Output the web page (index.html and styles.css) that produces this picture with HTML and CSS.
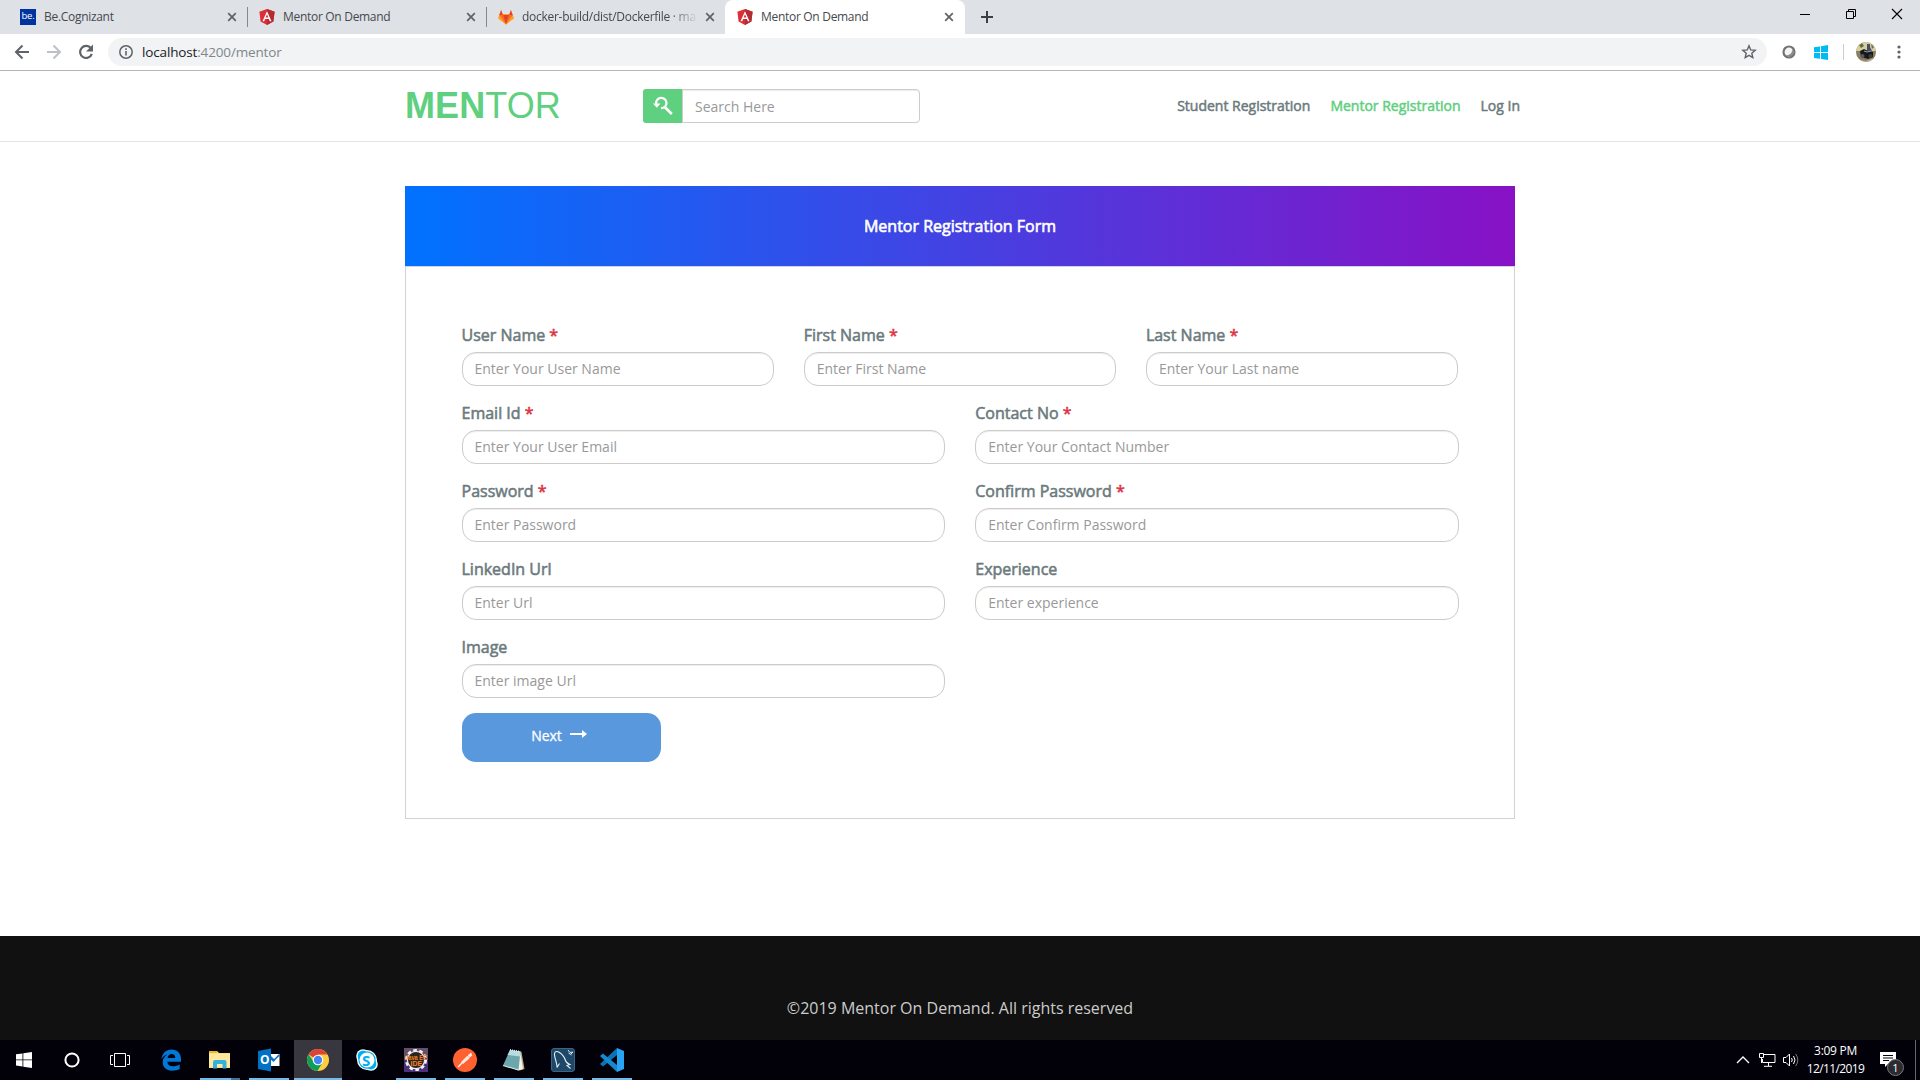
FILE: index.html
```html
<!DOCTYPE html>
<html lang="en">
<head>
<meta charset="utf-8">
<title>Mentor On Demand</title>
<link rel="stylesheet" href="styles.css">
</head>
<body>
<svg class="defs" width="0" height="0">
  <symbol id="angular" viewBox="0 0 16 16"><path d="M8 0l7.6 2.7-1.2 9.7L8 16l-6.400-3.600L.4 2.700z" fill="#dd2d35"/><path d="M8 0l7.600 2.700-1.200 9.700L8 16z" fill="#b52b32"/><path d="M8 2.200L3.500 12.200h1.700l.9-2.200h3.800l.9 2.200h1.700zM8 5.300l1.300 3.200H6.700z" fill="#fff"/></symbol>
  <symbol id="close" viewBox="0 0 10 10"><path d="M1.200 1.200l7.600 7.600M8.800 1.200L1.200 8.800" stroke="#5f6368" stroke-width="1.700" fill="none"/></symbol>
</svg>
<div class="screen">
  <div class="tabstrip">
    <div class="tab"><span class="be">be.</span><span class="tab-title">Be.Cognizant</span><svg class="x"><use href="#close"/></svg></div>
    <div class="tab divided"><svg class="fav"><use href="#angular"/></svg><span class="tab-title">Mentor On Demand</span><svg class="x"><use href="#close"/></svg></div>
    <div class="tab divided"><svg class="fav" viewBox="0 0 16 16"><path d="M8 15.500L0 9.500 1.300 5h13.400L16 9.500z" fill="#fca326"/><path d="M3.100 .8L1.300 6h3.600zM12.900 .8L14.700 6h-3.600z" fill="#e24329"/><path d="M1.300 6H5l3 9.500zM14.700 6H11l-3 9.500z" fill="#fc6d26"/><path d="M5 6h6l-3 9.500z" fill="#e24329"/></svg><span class="tab-title fade">docker-build/dist/Dockerfile · ma</span><svg class="x"><use href="#close"/></svg></div>
    <div class="tab active"><svg class="fav"><use href="#angular"/></svg><span class="tab-title">Mentor On Demand</span><svg class="x"><use href="#close"/></svg></div>
    <svg class="plus" viewBox="0 0 12 12"><path d="M6 0v12M0 6h12" stroke="#3c4043" stroke-width="2"/></svg>
    <div class="winctl">
      <svg viewBox="0 0 46 28"><path d="M18 14.500h10" stroke="#000"/></svg>
      <svg viewBox="0 0 46 28"><path d="M18.500 11.500h7v7h-7zM20.500 11V9.500h7v7H26" fill="none" stroke="#000"/></svg>
      <svg viewBox="0 0 46 28"><path d="M18 9l10 10M28 9L18 19" stroke="#000" stroke-width="1.100"/></svg>
    </div>
  </div>
  <div class="toolbar">
    <svg class="nav-ic" viewBox="0 0 32 36"><path d="M29 18H16.500M22.500 11.500L16 18l6.500 6.500" fill="none" stroke="#5f6368" stroke-width="2"/></svg>
    <svg class="nav-ic" viewBox="0 0 32 36"><path d="M15 18h12.500M21.500 11.500L28 18l-6.500 6.500" fill="none" stroke="#bdc1c6" stroke-width="2"/></svg>
    <svg class="nav-ic" viewBox="0 0 32 36"><path d="M27 14.500a6 6 0 1 0 .8 5.300" fill="none" stroke="#5f6368" stroke-width="2.200"/><path d="M29 10.500v7h-7z" fill="#5f6368"/></svg>
    <div class="omnibox">
      <svg class="info" viewBox="0 0 14 14"><circle cx="7" cy="7" r="6.200" fill="none" stroke="#5f6368" stroke-width="1.500"/><path d="M7 6v4.500M7 3.300V5" stroke="#5f6368" stroke-width="1.600"/></svg>
      <span class="url">localhost<i>:4200/mentor</i></span>
      <svg class="star" viewBox="0 0 16 16"><path d="M8 1.800l1.700 4.100 4.500.4-3.400 2.900 1 4.400L8 11.300l-3.800 2.300 1-4.400-3.400-2.900 4.500-.4z" fill="none" stroke="#5f6368" stroke-width="1.400"/></svg>
    </div>
    <div class="exts">
      <svg width="14" height="14" viewBox="0 0 14 14"><circle cx="7" cy="7" r="5.500" fill="#f4f4f4" stroke="#737373" stroke-width="2.200"/><path d="M10.500 4.500A4.300 4.300 0 0 1 4 10.300C8 10.500 10 8 10.500 4.500" fill="#8a8a8a"/></svg>
      <svg width="14" height="15" viewBox="0 0 14 15"><path d="M0 2.300l6-.9v5.700H0zM7 1.200L14 0v7.100H7zM0 8.100h6v5.700l-6-.9zM7 8.100h7V15l-7-1z" fill="#00bcf2"/></svg>
      <span class="vline"></span>
      <svg width="20" height="20" viewBox="0 0 20 20"><clipPath id="c"><circle cx="10" cy="10" r="10"/></clipPath><g clip-path="url(#c)"><path d="M0 0h20v20H0z" fill="#8a7d62"/><path d="M0 0h20v9H0z" fill="#d4cf9f"/><path d="M3 3l3-2 2 3-3 2zM15 2l3 3-2 2z" fill="#6b6b3e"/><path d="M11 2h3v3l2 4h-5z" fill="#4a4a70"/><path d="M4 9l4-2 4 2 5 1v5l-5 2-7-2z" fill="#16181b"/><circle cx="6.500" cy="14" r="2" fill="#54595c"/><circle cx="14.500" cy="14" r="2" fill="#3b3c38"/><path d="M0 16l4 2 6 1 8-3v4H0z" fill="#c5b194"/><path d="M8 9l3 1 4-1" stroke="#92a09c" fill="none"/></g></svg>
      <svg width="4" height="14" viewBox="0 0 4 14"><g fill="#5f6368"><circle cx="2" cy="2" r="1.600"/><circle cx="2" cy="7" r="1.600"/><circle cx="2" cy="12" r="1.600"/></g></svg>
    </div>
  </div>
  <main class="page">
    <header class="site-header">
      <div class="container">
        <a class="logo"><b>MEN</b>TOR</a>
        <div class="search">
          <span class="search-btn"><svg width="20" height="20" viewBox="0 0 20 20"><path d="M3.200 8A5.200 5.200 0 1 1 8 12.200" fill="none" stroke="#fff" stroke-width="2.300"/><path d="M0 7.500h7.500l-3.700 4.300z" fill="#fff"/><path d="M11.500 10.700l7.300 7.300" stroke="#fff" stroke-width="2.700"/></svg></span>
          <input class="search-input" placeholder="Search Here">
        </div>
        <nav class="nav"><a>Student Registration</a><a class="on">Mentor Registration</a><a>Log In</a></nav>
      </div>
    </header>
    <section class="card">
      <h1 class="card-title">Mentor Registration Form</h1>
      <form class="form">
        <div class="row three">
          <label>User Name <em>*</em><input placeholder="Enter Your User Name"></label>
          <label>First Name <em>*</em><input placeholder="Enter First Name"></label>
          <label>Last Name <em>*</em><input placeholder="Enter Your Last name"></label>
        </div>
        <div class="row">
          <label>Email Id <em>*</em><input placeholder="Enter Your User Email"></label>
          <label>Contact No <em>*</em><input placeholder="Enter Your Contact Number"></label>
          <label>Password <em>*</em><input placeholder="Enter Password"></label>
          <label>Confirm Password <em>*</em><input placeholder="Enter Confirm Password"></label>
          <label>LinkedIn Url<input placeholder="Enter Url"></label>
          <label>Experience<input placeholder="Enter experience"></label>
          <label>Image<input placeholder="Enter image Url"></label>
        </div>
        <button class="next" type="button">Next<svg width="17" height="8" viewBox="0 0 17 8"><path d="M0 3h12V0l5 4-5 4V5H0z" fill="#fff"/></svg></button>
      </form>
    </section>
    <footer class="footer">©2019 Mentor On Demand. All rights reserved</footer>
  </main>
  <div class="taskbar">
    <div class="sys">
      <svg width="16" height="16" viewBox="0 0 16 16"><path d="M0 2.300l6.500-.9v6.100H0zM7.300 1.200L16 0v7.500H7.300zM0 8.300h6.500v6.200L0 13.600zM7.300 8.300H16V16l-8.700-1.200z" fill="#fff"/></svg>
      <svg width="16" height="16" viewBox="0 0 16 16"><circle cx="8" cy="8" r="6.600" fill="none" stroke="#fff" stroke-width="2"/></svg>
      <svg width="20" height="14" viewBox="0 0 20 14"><path d="M4.500.5h11v13h-11zM3 2.500H.500v9H3M17 2.500h2.500v9H17" fill="none" stroke="#fff"/></svg>
    </div>
    <div class="apps">
      <span><svg width="24" height="24" viewBox="0 0 24 24"><path d="M2.300 11.300C3.500 5 7 1.500 12.500 1.500c6 0 9.500 4.300 9.500 9.300v3H8.300c.2 3 2.500 4.500 5.700 4.500 2.500 0 4.700-.7 6.700-1.800v4.600c-2 1-4.500 1.600-7.700 1.600-5.700 0-9.300-3.500-9.300-8.400 0-3.300 1.700-6 4.800-7.700-2.500.5-4.700 2-6.200 4.700zM8.500 10h7.800c-.1-2.500-1.400-4-3.700-4S8.900 7.700 8.500 10z" fill="#0078d7"/></svg></span>
      <span class="run stacked"><svg width="22" height="20" viewBox="0 0 22 20"><path d="M0 1h8l2 2h11v15H0z" fill="#ffe08a"/><path d="M0 1h8v2H0z" fill="#efb919"/><path d="M0 4h21v13H0z" fill="#ffe99c"/><path d="M4 18.500V12q0-2 2-2h9.500q2 0 2 2v6.500h-4V14H8v4.500z" fill="#34b1e3"/></svg></span>
      <span class="run outlook"><svg width="24" height="24" viewBox="0 0 24 24"><path d="M12 6h10.500v12H12z" fill="#fff"/><path d="M12 7l5 5 5.500-5M13 10l3.500 3 5.500-6" fill="none" stroke="#1173c7" stroke-width="1.500"/><path d="M1 3l13-2.500v23L1 21z" fill="#0072c6"/><text x="3" y="16" class="glyph" font-size="12">O</text></svg></span>
      <span class="run current"><svg width="24" height="24" viewBox="0 0 24 24"><circle cx="12" cy="12" r="11" fill="#ffcd40"/><path d="M12 12L2.500 6.500A11 11 0 0 1 21.500 6.500H12z" fill="#db4437"/><path d="M2.500 6.500A11 11 0 0 0 11.500 23l5-8.400-4.500 1.500-4-2z" fill="#0f9d58"/><circle cx="12" cy="12" r="5.300" fill="#fff"/><circle cx="12" cy="12" r="4.200" fill="#4285f4"/></svg></span>
      <span><svg width="24" height="24" viewBox="0 0 24 24"><circle cx="8" cy="8" r="6.800" fill="#fff"/><circle cx="16" cy="16" r="6.800" fill="#fff"/><circle cx="12" cy="12" r="10" fill="#fff"/><circle cx="12" cy="12" r="8.700" fill="#00aff0"/><circle cx="8" cy="8" r="5.400" fill="#00aff0"/><circle cx="16" cy="16" r="5.400" fill="#00aff0"/><circle cx="12" cy="12" r="7.500" fill="#fff"/><text x="7" y="17.500" class="glyph skype" font-size="15">S</text></svg></span>
      <span class="run"><svg width="24" height="24" viewBox="0 0 24 24"><path d="M0 0h24v24H0z" fill="#4b3179"/><path d="M0 0h24v12H0z" fill="#665069"/><circle cx="12" cy="12" r="9.500" fill="none" stroke="#f4f4f4" stroke-width="3" stroke-dasharray="3.500 2.470"/><circle cx="12" cy="12" r="8.600" fill="#2d2422" stroke="#e9e9e9" stroke-width="1.200"/><text x="1" y="11.500" class="java" textLength="22" lengthAdjust="spacingAndGlyphs">Java EE</text><text x="6.500" y="18" class="java">IDE</text></svg></span>
      <span class="run"><svg width="24" height="24" viewBox="0 0 24 24"><circle cx="12" cy="12" r="12" fill="#ff6130"/><path d="M5 19l7-7" stroke="#fff" stroke-width="1.200"/><path d="M8.500 14l6-6 2 2-6.500 5.500zM15 7.500l3-2.500.8 2.500L17 9z" fill="#ffeae1" stroke="#fff" stroke-width=".6"/></svg></span>
      <span class="run"><svg width="24" height="24" viewBox="0 0 24 24"><path d="M16 3l3.500 1 3 17-5 1.500z" fill="#b9aa8c"/><path d="M18 3l3 18-4.500 1.500-3-1z" fill="#f4f1e6"/><path d="M8 2l10.500 1.500-2 18.500L1 17.500z" fill="#6da7ae"/><path d="M8 2l10.500 1.500-.6 5L5.500 7z" fill="#b5dee2"/><path d="M8 1.800l10 1.700" stroke="#eee" stroke-width="1.500" stroke-dasharray="1 1"/><path d="M1 17.500l15.500 4.500" stroke="#d3e7e6" stroke-width="1.200"/></svg></span>
      <span class="run"><svg width="24" height="24" viewBox="0 0 24 24"><rect x=".5" y=".5" width="23" height="23" rx="2.500" fill="#1f4767" stroke="#3a6685"/><path d="M8.500 15.500L6 19.500C6.500 16 3 9 3.500 5.500 4 3 6 3 8.500 4.500c3 2 5 4.500 6 8 .7 2.500 2 3 4.500 4l-3 1 3.500 3" fill="none" stroke="#e4edf2" stroke-width="1.100"/><path d="M17 2l2 2.500 3-.5-2 2M17.500 5l3 2" stroke="#dce7ee" fill="none"/></svg></span>
      <span class="run"><svg width="24" height="24" viewBox="0 0 24 24"><path d="M17 0l7 3v18l-7 3z" fill="#27a5f2"/><path d="M17 0v7L3 18.500 0 16z" fill="#0a73b8"/><path d="M17 24v-7L3 5.500 0 8z" fill="#1688cf"/></svg></span>
    </div>
    <div class="tray">
      <svg width="14" height="8" viewBox="0 0 14 8"><path d="M1 7l6-6 6 6" fill="none" stroke="#fff" stroke-width="1.300"/></svg>
      <svg width="17" height="14" viewBox="0 0 17 14"><path d="M5 1.500h11v8H3.500V6M9.500 10v3M5 13.300h8M.5.500h4v4h-4zM2.500 5v5" fill="none" stroke="#fff"/></svg>
      <svg width="18" height="14" viewBox="0 0 18 14"><path d="M.5 4.500H3L6.500 1v12L3 9.500H.500zM8.500 5q1.500 2 0 4M10.500 3q3 4 0 8" fill="none" stroke="#fff"/><path d="M12.700 1q4.300 6 0 12" fill="none" stroke="#777"/></svg>
      <div class="clock"><span>3:09 PM</span><span>12/11/2019</span></div>
      <div class="note"><svg width="17" height="16" viewBox="0 0 17 16"><path d="M0 0h16v12h-8l-3 3v-3H0z" fill="#fff"/><path d="M3 3.500h10M3 6h10M3 8.500h6" stroke="#020109"/></svg><span class="badge">1</span></div>
      <span class="peek"></span>
    </div>
  </div>
</div>
</body>
</html>
```

FILE: styles.css
```css
* { box-sizing: border-box; }
body { margin: 0; overflow: hidden; font-family: "Open Sans", sans-serif; }
svg { display: block; flex: none; }
.defs { position: absolute; }
.screen { width: 1920px; height: 1080px; display: flex; flex-direction: column; background: #fff; }

.tabstrip { height: 34px; flex: none; display: flex; align-items: center; padding-left: 8px; background: #dee1e6; }
.tab { width: 239px; height: 34px; display: flex; align-items: center; padding: 0 0 0 12px; font-size: 12px; color: #45494d; }
.divided { background: linear-gradient(#85888c, #85888c) 0 7px / 1px 20px no-repeat; }
.active { width: 240px; background: #fff; border-radius: 8px 8px 0 0; }
.fav, .be { width: 16px; height: 16px; flex: none; }
.be { background: #0033a0; color: #fff; font-size: 9.5px; line-height: 13px; text-align: center; letter-spacing: -.2px; }
.tab-title { width: 180px; flex: none; margin-left: 8px; white-space: nowrap; line-height: 20px; letter-spacing: -.3px; }
.fade { letter-spacing: -.28px; -webkit-mask-image: linear-gradient(90deg, #000 82%, transparent 98%); mask-image: linear-gradient(90deg, #000 82%, transparent 98%); }
.x { width: 10px; height: 10px; margin-left: 3px; }
.plus { width: 12px; height: 12px; margin-left: 16px; }
.winctl { display: flex; align-self: flex-start; margin-left: auto; }
.winctl svg { width: 46px; height: 28px; }

.toolbar { height: 37px; flex: none; display: flex; align-items: flex-start; border-bottom: 1px solid #b6b4b6; }
.nav-ic { width: 32px; height: 36px; }
.omnibox { width: 1659px; height: 28px; margin: 4px 0 0 12px; padding: 0 10px 0 11px; display: flex; align-items: center; background: #f1f3f4; border-radius: 14px; }
.info { width: 14px; height: 14px; }
.url { margin-left: 9px; font-size: 13.5px; letter-spacing: -.15px; color: #202124; }
.url i { font-style: normal; color: #80868b; }
.star { width: 16px; height: 16px; margin-left: auto; }
.exts { height: 36px; display: flex; align-items: center; padding-left: 15px; }
.exts svg:nth-child(2) { margin-left: 18px; }
.vline { width: 1px; height: 16px; margin: 0 12px 0 15px; background: #c9ccd0; }
.exts svg:last-child { margin-left: 21px; }

.page { height: 969px; flex: none; display: flex; flex-direction: column; }
.site-header { height: 71px; flex: none; border-bottom: 1px solid #e4e4e4; }
.container { width: 1115px; height: 70px; margin-left: 405px; display: flex; }
.logo { width: 238px; padding-top: 15px; font: 36px/40px "Liberation Sans", Arial, sans-serif; letter-spacing: .1px; color: #5fcf80; }
.search { width: 277px; height: 34px; margin-top: 18px; display: flex; }
.search-btn { width: 39px; height: 34px; padding: 7px 0 0 10px; background: #5fcf80; border-radius: 3px 0 0 3px; }
input { border: 1px solid #ccc; outline: 0; background: #fff; box-shadow: inset 0 1px 1px rgba(0, 0, 0, .075); font: 14px/20px "Open Sans", sans-serif; }
input::placeholder { color: #999; opacity: 1; }
.search-input { width: 238px; height: 34px; padding: 2px 12px 1px; border-radius: 0 4px 4px 0; }
.nav { margin-left: auto; display: flex; gap: 20px; padding-top: 25px; font-size: 14px; line-height: 20px; color: #6b7a7d; -webkit-text-stroke: .5px; white-space: nowrap; }
.on { color: #5fcf80; }

.card { width: 1110px; height: 633px; flex: none; margin: 44px 0 0 405px; }
.card-title { height: 80px; margin: 0; background: linear-gradient(90deg, #0072ff, #8811c5); color: #fff; text-align: center; font-size: 16px; font-weight: 400; line-height: 80px; -webkit-text-stroke: .6px; }
.form { height: 553px; padding: 57px 55px 0 55.500px; border: 1px solid #ced4da; }
.row { display: grid; grid-template-columns: 1fr 1fr; gap: 16px 30px; margin-bottom: 16px; }
.three { grid-template-columns: repeat(3, 312.2px); }
label { display: block; height: 62px; font-size: 16px; line-height: 22px; color: #6b7a7d; -webkit-text-stroke: .55px; }
label em { font-style: normal; color: #dc3545; }
label input { display: block; width: 100%; height: 34px; margin-top: 6px; padding: 1px 12px 2px; border-radius: 14px; -webkit-text-stroke: 0; }
.next { width: 199px; height: 49px; margin-top: -1px; padding: 0 4px 3px 0; display: flex; align-items: center; justify-content: center; border: 0; border-radius: 14px; background: #5a98dd; color: #fff; font: 14px/20px "Open Sans", sans-serif; -webkit-text-stroke: .3px; }
.next svg { margin: -5px 0 0 8px; }

.footer { margin-top: 117px; height: 104px; background: #111; color: #ccc; text-align: center; font-size: 16px; line-height: 22px; padding-top: 61px; }

.taskbar { height: 40px; flex: none; display: flex; background: #020109; }
.sys { width: 147px; display: flex; }
.sys svg { margin: 12px 16px; }
.sys svg:last-child { margin: 13px 0 0 14px; }
.apps { display: flex; gap: 1px; }
.apps span { width: 48px; height: 40px; display: flex; align-items: center; justify-content: center; }
.run { background: linear-gradient(#76b9ed, #76b9ed) 4px 38px / 40px 2px no-repeat; }
.stacked { background: linear-gradient(90deg, #76b9ed 31px, #456f96 31px) 4px 38px / 40px 2px no-repeat; }
.current { background: linear-gradient(#76b9ed, #76b9ed) 0 38px / 48px 2px no-repeat #38373f; }
.glyph { font-family: "Open Sans", sans-serif; font-weight: 700; fill: #fff; }
.skype { fill: #00aff0; }
.java { font: 700 7px "Liberation Sans", sans-serif; fill: #f58220; }
.tray { margin-left: auto; display: flex; align-items: center; color: #fff; }
.tray svg:nth-child(2) { margin-left: 9px; }
.tray svg:nth-child(3) { margin-left: 7px; }
.clock { width: 71px; padding-right: 2px; display: flex; flex-direction: column; align-items: center; font-size: 12px; line-height: 18px; letter-spacing: -.6px; }
.clock span:first-child { letter-spacing: -.3px; }
.note { position: relative; width: 43px; height: 40px; padding: 12px 0 0 8px; }
.badge { position: absolute; left: 15px; top: 19px; width: 17px; height: 17px; border-radius: 50%; background: #2b2b30; border: 1px solid #77777b; font-size: 11px; line-height: 15px; text-align: center; }
.peek { width: 1px; height: 40px; margin: 0 4px 0 0; background: #66666b; }
```
